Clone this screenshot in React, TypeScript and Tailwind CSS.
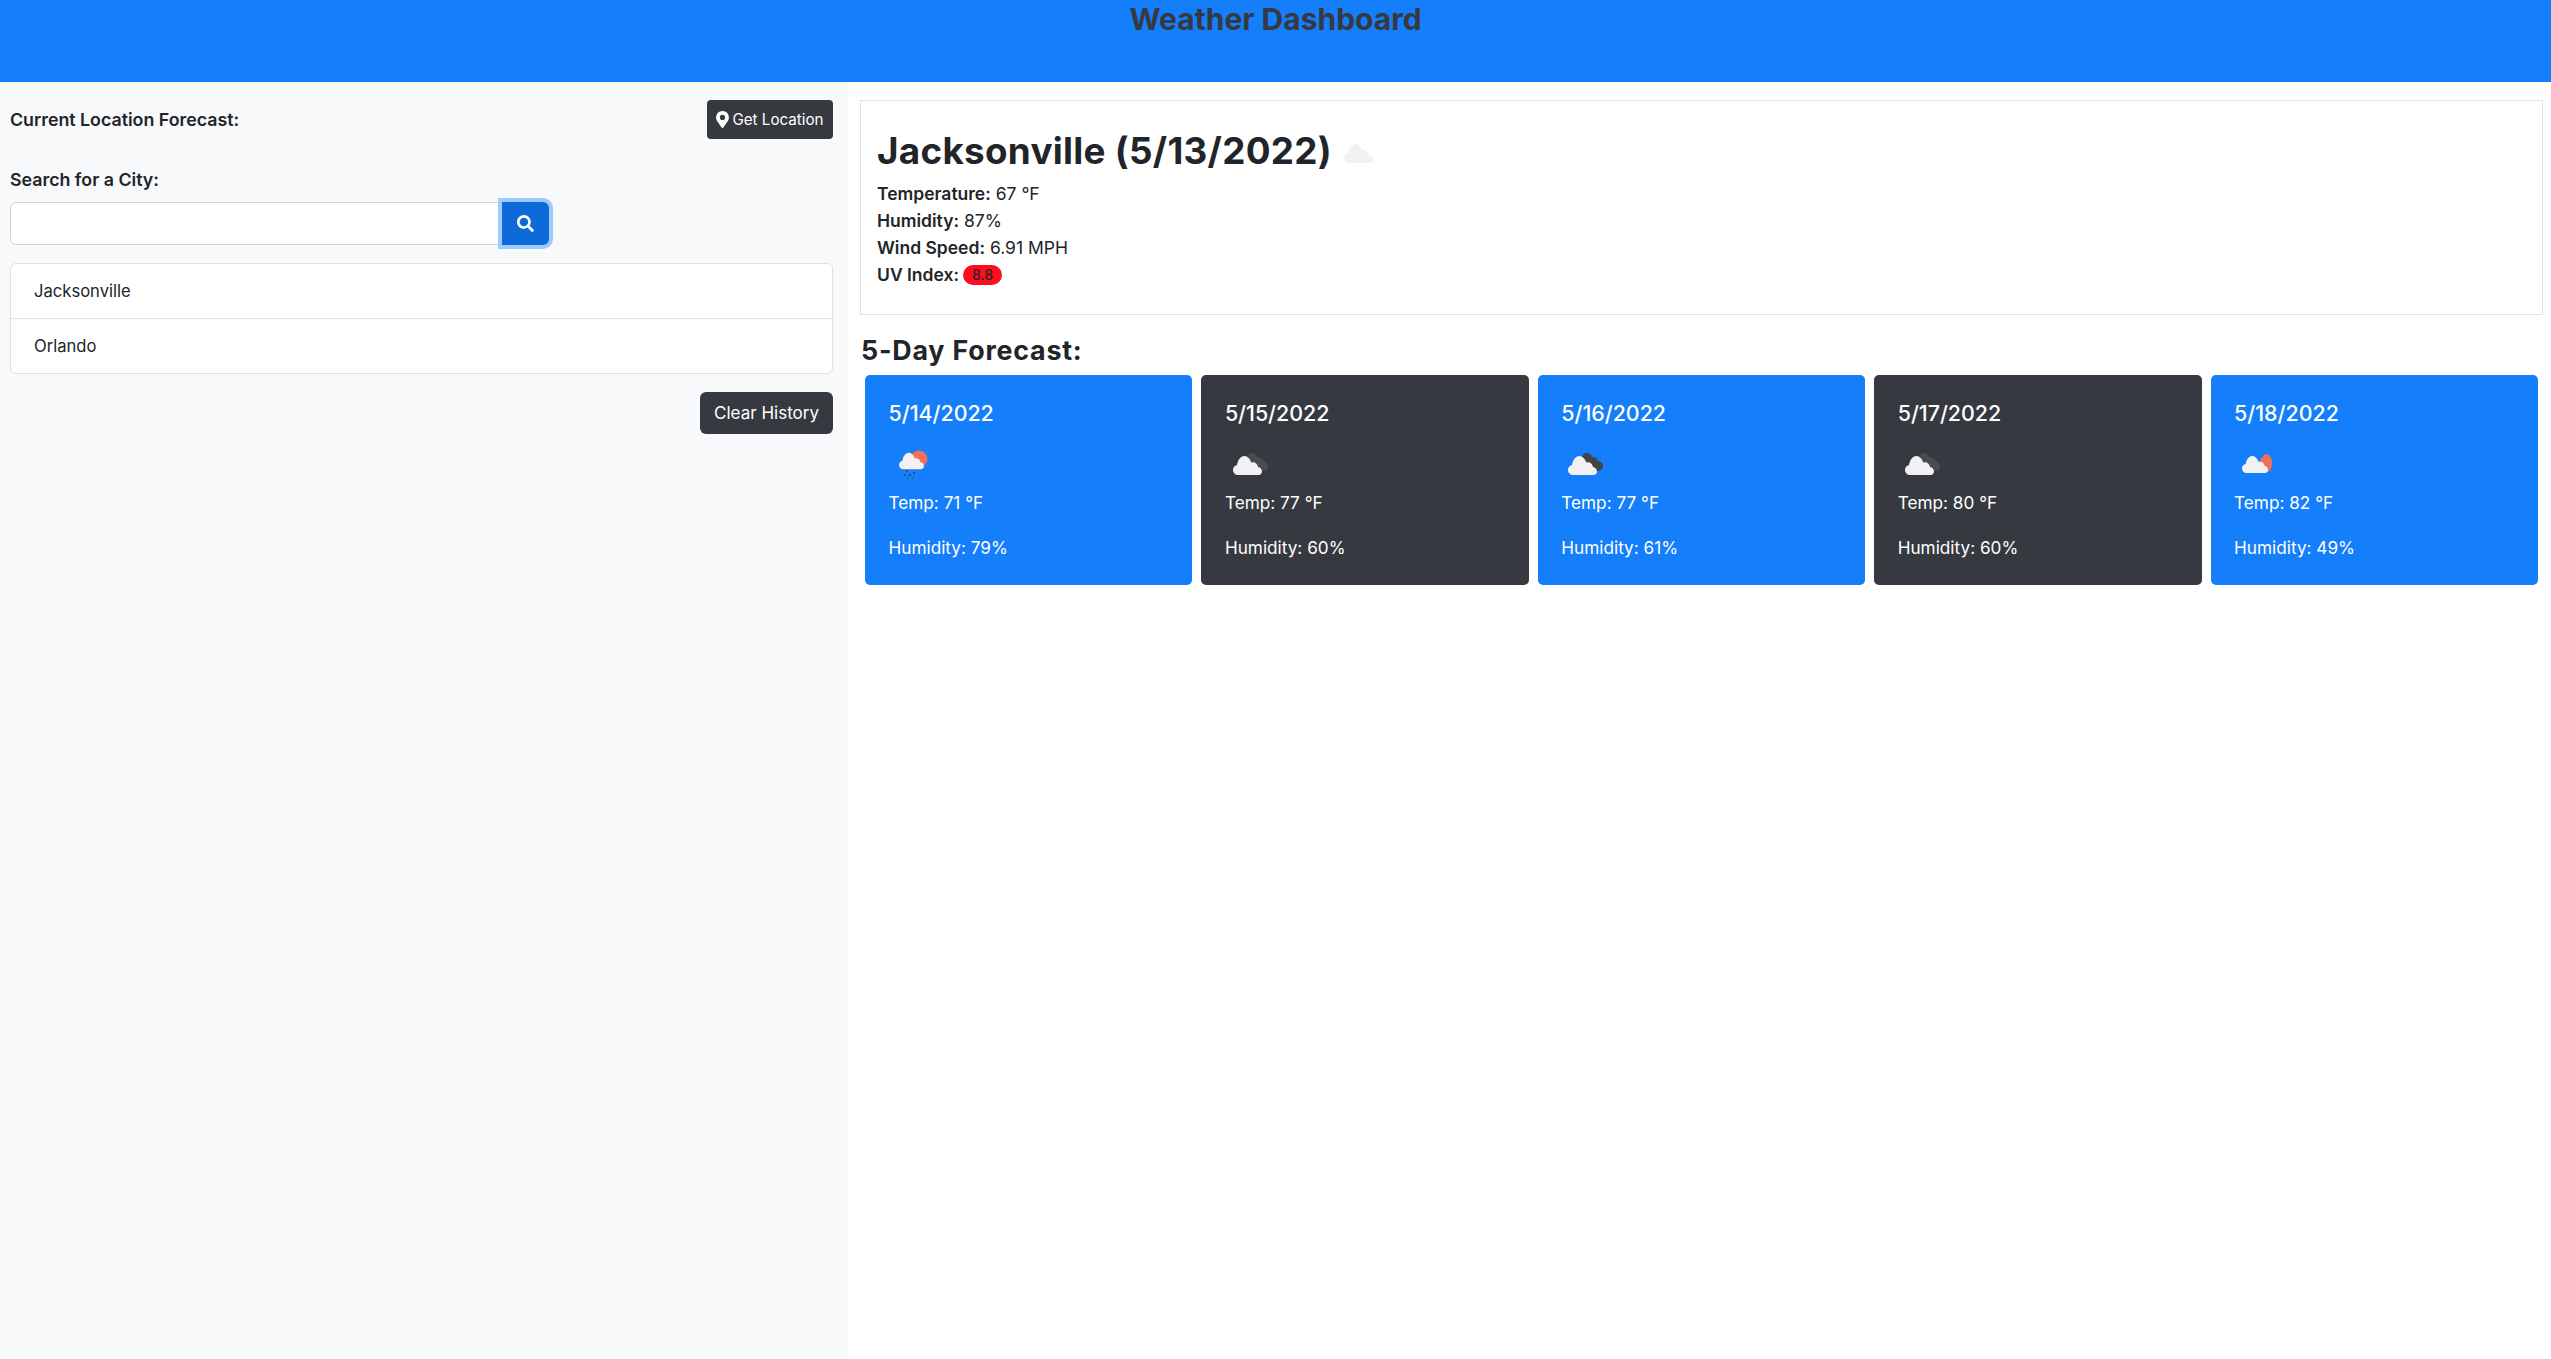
import React from "react";
import { FaMapMarkerAlt, FaSearch } from "react-icons/fa";

const Cloud = ({ x = 0, y = 0, s = 1, fill = "#f1f1f1" }: { x?: number; y?: number; s?: number; fill?: string }) => (
  <path
    transform={`translate(${x} ${y}) scale(${s})`}
    fill={fill}
    d="M5 20C2.2 20 0 17.8 0 15C0 12.6 1.7 10.6 4 10.1C4.6 5.5 7.5 1 11.3 1C14.6 1 17.2 4 18.2 7.5C18.7 7.3 19.3 7.2 20 7.2C22.6 7.2 24.7 9.3 25 12C27.3 12.3 29 14.4 29 16.6C29 18.5 27.5 20 25.5 20Z"
  />
);

const Icon = ({ kind }: { kind: "rain" | "dark" | "soft" | "sunOnly" }) => {
  if (kind === "rain")
    return (
      <svg viewBox="0 0 30 30" className="w-[30px] h-[30px] ml-[10px] mt-[2px] block">
        <circle cx="20" cy="9" r="8.5" fill="#f0705a" />
        <Cloud x={0} y={2} s={0.86} />
        <g stroke="#444" strokeWidth="1.6">
          <path d="M8 20v2M6 24v2M11 24v2M15 22v2M9 28v1M14 28v1" />
        </g>
      </svg>
    );
  if (kind === "sunOnly")
    return (
      <svg viewBox="0 0 32 24" className="w-[32px] h-[24px] ml-[1px] block">
        <path d="M23 2C28 2 30 6 30 11C30 15 29 18 27 20L18 8Z" fill="#f0705a" />
        <Cloud y={3} s={0.9} />
      </svg>
    );
  const dark = kind === "soft" ? "#4a4b4f" : "#444444";
  return (
    <svg viewBox="0 0 36 24" className="w-[36px] h-[24px] block">
      <circle cx="19" cy="6" r="5" fill={dark} />
      <circle cx="25" cy="10" r="5" fill={dark} />
      <circle cx="30" cy="14" r="5" fill={dark} />
      <Cloud y={3} s={1} />
    </svg>
  );
};

const days = [
  { date: "5/14/2022", temp: "71", hum: "79", blue: true, icon: "rain", pad: "" },
  { date: "5/15/2022", temp: "77", hum: "60", blue: false, icon: "soft", pad: "ml-[8px]" },
  { date: "5/16/2022", temp: "77", hum: "61", blue: true, icon: "dark", pad: "ml-[7px]" },
  { date: "5/17/2022", temp: "80", hum: "60", blue: false, icon: "soft", pad: "ml-[7px]" },
  { date: "5/18/2022", temp: "82", hum: "49", blue: true, icon: "sunOnly", pad: "ml-[7px]" },
] as const;

export default function App() {
  return (
    <div className="min-h-screen bg-white text-[#212529] font-['Inter','Liberation_Sans',sans-serif]">
      <header className="h-[82px] bg-[#147efb] text-center">
        <h1 className="text-[30px] leading-[38px] font-bold text-[#363a40]">Weather Dashboard</h1>
      </header>
      <div className="flex min-h-[1277px]">
        <aside className="w-[848px] shrink-0 bg-[#f8f9fa] pl-[10px] pr-[15px] pt-[18px]">
          <div className="flex items-center justify-between h-[39px]">
            <span className="text-[17.8px] font-semibold pt-[1px]">Current Location Forecast:</span>
            <button className="h-[39px] w-[126px] rounded-[4px] bg-[#363a40] text-white text-[15.2px] flex items-center justify-center gap-[3px] pt-[1px]">
              <FaMapMarkerAlt className="w-[13px] h-[17px] -mt-[1px]" />
              Get Location
            </button>
          </div>
          <label className="block mt-[28px] text-[17.8px] font-semibold leading-[25px]">Search for a City:</label>
          <div className="flex mt-[10px] w-[539px] h-[43px]">
            <input className="w-[489px] bg-white border border-[#ced4da] rounded-l-[6px] outline-none" />
            <button className="relative ml-[3px] w-[47px] h-[43px] rounded-r-[6px] bg-[#0f6ad9] text-white flex items-center justify-center shadow-[0_0_0_4px_#9fcafc]">
              <FaSearch className="w-[17px] h-[17px]" />
            </button>
          </div>
          <ul className="mt-[18px] bg-white border border-[#dfe1e4] rounded-[6px] text-[16.6px]">
            <li className="h-[55px] flex items-center pl-[23px] border-b border-[#dfe1e4]">Jacksonville</li>
            <li className="h-[54px] flex items-center pl-[23px]">Orlando</li>
          </ul>
          <div className="flex justify-end mt-[18px]">
            <button className="w-[133px] h-[42px] rounded-[6px] bg-[#363a40] text-white text-[17px] pt-[1px]">Clear History</button>
          </div>
        </aside>
        <main className="flex-1 min-w-0 pl-[12px] pr-[8px] pt-[18px]">
          <section className="h-[215px] border border-[#dfe1e4] pl-[16px] pt-[25px]">
            <h2 className="flex items-center text-[36.8px] leading-[49px] font-bold tracking-[0.3px]">
              Jacksonville (5/13/2022)
              <svg viewBox="0 0 30 20" className="w-[30px] h-[20px] ml-[12px] mt-[5px]">
                <Cloud />
              </svg>
            </h2>
            <div className="mt-[5px] text-[17.5px] leading-[27px]">
              <p><b className="font-semibold">Temperature:</b> 67 °F</p>
              <p><b className="font-semibold">Humidity:</b> 87%</p>
              <p><b className="font-semibold">Wind Speed:</b> 6.91 MPH</p>
              <p className="flex items-center">
                <b className="font-semibold">UV Index:</b>
                <span className="ml-[4px] w-[39px] h-[20px] rounded-full bg-[#ff0d1e] text-[14px] leading-[20px] text-center font-medium">8.8</span>
              </p>
            </div>
          </section>
          <h3 className="ml-[1px] mt-[17px] text-[26.8px] leading-[36px] font-bold tracking-[0.8px]">5-Day Forecast:</h3>
          <div className="grid grid-cols-5 gap-[9px] px-[5px] mt-[7px]">
            {days.map((d) => (
              <div
                key={d.date}
                className={`h-[210px] rounded-[5px] text-white pl-[23.5px] pt-[24px] ${d.blue ? "bg-[#147efb]" : "bg-[#363a40]"}`}
              >
                <div className="text-[21.4px] leading-[28px] font-medium">{d.date}</div>
                <div className={`mt-[22px] h-[30px] flex items-center ${d.pad}`}>
                  <Icon kind={d.icon} />
                </div>
                <p className="mt-[11px] text-[17.2px] leading-[25px]">Temp: {d.temp} °F</p>
                <p className="mt-[20px] text-[17.2px] leading-[25px]">Humidity: {d.hum}%</p>
              </div>
            ))}
          </div>
        </main>
      </div>
    </div>
  );
}
